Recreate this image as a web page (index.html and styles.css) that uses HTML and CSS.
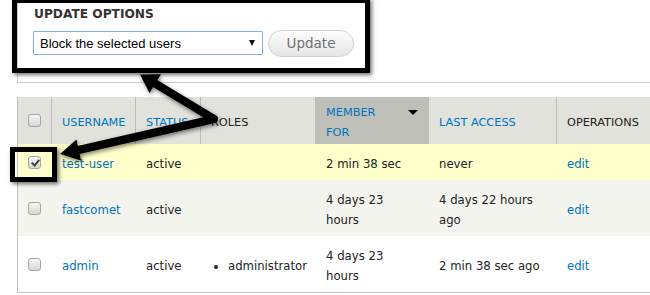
FILE: index.html
```html
<!DOCTYPE html>
<html lang="en">
<head>
    <meta charset="UTF-8">
    <meta name="viewport" content="width=device-width, initial-scale=1.0">
    <title>People</title>
    <link rel="stylesheet" href="styles.css">
</head>
<body>
<div class="page">

    <!-- Update options -->
    <div class="fieldset">
        <div class="legend">UPDATE OPTIONS</div>
        <div class="actions">
            <span class="select-wrap">
                <select class="action-select">
                    <option>Block the selected users</option>
                </select>
            </span>
            <button class="btn-update" type="button">Update</button>
        </div>
    </div>

    <!-- User list -->
    <table class="users">
        <colgroup>
            <col style="width: 33px">
            <col style="width: 84px">
            <col style="width: 65px">
            <col style="width: 115px">
            <col style="width: 113px">
            <col style="width: 128px">
            <col style="width: 120px">
        </colgroup>
        <thead>
            <tr>
                <th class="select-all"><input class="check" type="checkbox"></th>
                <th><a href="#">USERNAME</a></th>
                <th><a href="#">STATUS</a></th>
                <th>ROLES</th>
                <th class="active">
                    <a class="sort-link" href="#"><span class="sort-text">MEMBER FOR</span><span class="sort-arrow"></span></a>
                </th>
                <th><a href="#">LAST ACCESS</a></th>
                <th>OPERATIONS</th>
            </tr>
        </thead>
        <tbody>
            <tr class="selected">
                <td class="cb"><input class="check" type="checkbox" checked></td>
                <td><a href="#">test-user</a></td>
                <td>active</td>
                <td></td>
                <td>2 min 38 sec</td>
                <td>never</td>
                <td><a href="#">edit</a></td>
            </tr>
            <tr class="even">
                <td class="cb"><input class="check" type="checkbox"></td>
                <td><a href="#">fastcomet</a></td>
                <td>active</td>
                <td></td>
                <td>4 days 23 hours</td>
                <td>4 days 22 hours ago</td>
                <td><a href="#">edit</a></td>
            </tr>
            <tr class="odd">
                <td class="cb"><input class="check" type="checkbox"></td>
                <td><a href="#">admin</a></td>
                <td>active</td>
                <td><ul class="roles"><li>administrator</li></ul></td>
                <td>4 days 23 hours</td>
                <td>2 min 38 sec ago</td>
                <td><a href="#">edit</a></td>
            </tr>
        </tbody>
    </table>

    <!-- Annotations -->
    <div class="callout callout-options"></div>
    <div class="callout callout-check"></div>
    <svg class="arrows" width="650" height="295" viewBox="0 0 650 295">
        <polyline points="154.7,83.3 214,119 78.5,150" fill="none" stroke="#000" stroke-width="8" stroke-linejoin="round"/>
        <polygon points="140,74.5 161,74.2 149.5,93" fill="#000"/>
        <polygon points="60,154 81,160.5 76.5,139.5" fill="#000"/>
    </svg>
</div>
</body>
</html>
```

FILE: styles.css
```css
html, body {
    overflow: hidden;
}

body {
    margin: 0;
    background-color: #ffffff;
    font-family: 'DejaVu Sans', Verdana, sans-serif;
    color: #333;
}

a {
    color: #0074bd;
    text-decoration: none;
}

.page {
    position: relative;
    width: 700px;
    height: 295px;
    padding-left: 17px;
    box-sizing: border-box;
}

/* Update options box */
.fieldset {
    border: 1px solid #cccccc;
    border-top: none;
    padding: 6px 15px 26px 15px;
}

.legend {
    padding-left: 1px;
    font-size: 12.2px;
    font-weight: bold;
    line-height: 16px;
    color: #333;
}

.actions {
    display: flex;
    align-items: center;
    gap: 5px;
    margin-top: 8px;
    height: 26px;
}

.select-wrap {
    position: relative;
    display: block;
}

.select-wrap::after {
    content: "";
    position: absolute;
    right: 8px;
    top: 9px;
    border-left: 3.5px solid transparent;
    border-right: 3.5px solid transparent;
    border-top: 6px solid #111;
}

.action-select {
    appearance: none;
    -webkit-appearance: none;
    display: block;
    width: 230px;
    height: 24px;
    margin: 0;
    padding: 0 0 0 6px;
    border: 1px solid #7eb1e8;
    border-radius: 1px;
    background: #ffffff;
    font-family: 'Liberation Sans', Arial, sans-serif;
    font-size: 13px;
    color: #000;
}

.btn-update {
    width: 86px;
    height: 27px;
    margin: 0;
    padding: 0;
    border: 1px solid #d2d2d2;
    border-radius: 14px;
    background: linear-gradient(#fdfdfd, #e5e5e5);
    font-family: 'DejaVu Sans', Verdana, sans-serif;
    font-size: 13.5px;
    color: #707070;
}

/* Users table */
.users {
    table-layout: fixed;
    width: 659px;
    margin-top: 14px;
    border-collapse: separate;
    border-spacing: 0;
    border-left: 1px solid #bebfb9;
    border-bottom: 1px solid #c4c4c4;
}

.users th {
    height: 40px;
    padding: 6px 10px 1px 10px;
    background-color: #e1e2dc;
    border-left: 1px solid #bebfb9;
    font-size: 11.3px;
    font-weight: normal;
    line-height: 20px;
    text-align: left;
    color: #222;
    vertical-align: middle;
}

.users th:first-child {
    border-left: none;
    padding: 0;
    text-align: center;
}

.users th.active {
    background-color: #bebfb9;
}

.sort-link {
    display: flex;
    justify-content: space-between;
    align-items: flex-start;
}

.sort-text {
    max-width: 62px;
}

.sort-arrow {
    margin-top: 7px;
    border-left: 5.5px solid transparent;
    border-right: 5.5px solid transparent;
    border-top: 5.5px solid #000;
}

.users td {
    padding: 10px 10px 6px 10px;
    border-left: 1px solid transparent;
    font-size: 11.7px;
    line-height: 20px;
    color: #222;
    vertical-align: middle;
}

.users td.cb {
    border-left: none;
    padding: 0;
    text-align: center;
}

.users tr.selected td {
    background-color: #ffffcc;
}

.users tr.even td {
    background-color: #f3f4ee;
}

.users tr.odd td {
    background-color: #ffffff;
}

.roles {
    margin: 0;
    padding-left: 17px;
}

/* Checkboxes */
.check {
    appearance: none;
    -webkit-appearance: none;
    position: relative;
    width: 13px;
    height: 13px;
    margin: 0;
    border: 1px solid #a6a6a6;
    border-radius: 3px;
    background: linear-gradient(#f6f6f6, #d6d6d6);
    vertical-align: middle;
}

.check:checked::after {
    content: "";
    position: absolute;
    left: 3.5px;
    top: 1px;
    width: 3px;
    height: 6px;
    border-right: 2px solid #444;
    border-bottom: 2px solid #444;
    transform: rotate(40deg);
}

/* Annotations drawn over the screenshot */
.callout {
    position: absolute;
    border: 5px solid #000;
    box-shadow: 2px 2px 4px rgba(0, 0, 0, 0.55);
}

.callout-options {
    left: 12px;
    top: -2px;
    width: 348px;
    height: 65px;
}

.callout-check {
    left: 10px;
    top: 147px;
    width: 37px;
    height: 25px;
}

.arrows {
    position: absolute;
    left: 0;
    top: 0;
    pointer-events: none;
    filter: drop-shadow(1px 2px 2px rgba(0, 0, 0, 0.5));
}
```
